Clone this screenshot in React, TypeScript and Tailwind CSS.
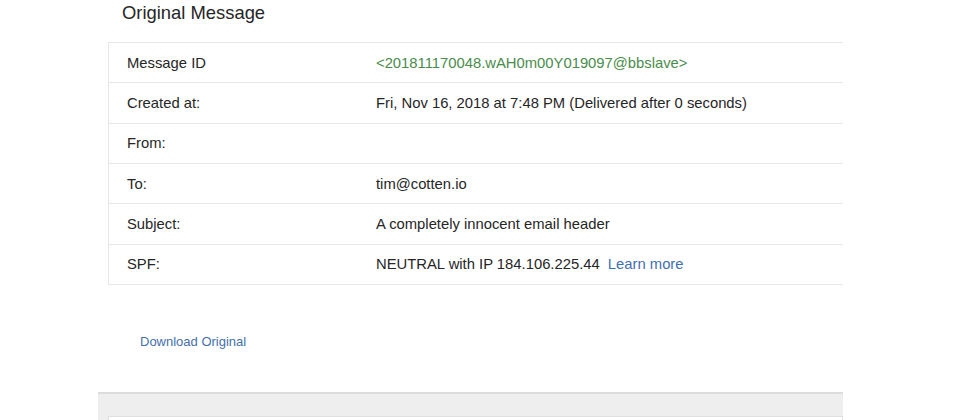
import React from "react";

const rows: { label: string; value: React.ReactNode }[] = [
  {
    label: "Message ID",
    value: <span className="text-[#4a8c4d]">&lt;201811170048.wAH0m00Y019097@bbslave&gt;</span>,
  },
  { label: "Created at:", value: "Fri, Nov 16, 2018 at 7:48 PM (Delivered after 0 seconds)" },
  { label: "From:", value: "" },
  { label: "To:", value: "tim@cotten.io" },
  { label: "Subject:", value: "A completely innocent email header" },
  {
    label: "SPF:",
    value: (
      <span>
        NEUTRAL with IP 184.106.225.44{" "}
        <span className="ml-[4px] text-[#3f6fb0]">Learn more</span>
      </span>
    ),
  },
];

export default function App() {
  return (
    <div className="w-[960px] h-[420px] overflow-hidden bg-white text-[#262626] font-['Liberation_Sans',Arial,sans-serif]">
      <div className="ml-[98px] w-[745px]">
        <div className="h-[42px] pl-[24px] pt-[1px] text-[18.4px] leading-[24px] text-[#262626]">
          Original Message
        </div>
        <div className="ml-[10px] border-l border-t border-[#e6e6e6]">
          {rows.map((r) => (
            <div
              key={r.label}
              className="grid grid-cols-[267px_1fr] items-center h-[40.33px] border-b border-[#e6e6e6] text-[14.8px]"
            >
              <div className="pl-[18px]">{r.label}</div>
              <div>{r.value}</div>
            </div>
          ))}
        </div>
        <div className="h-[107px] pl-[42px] pt-[49px] text-[13px] leading-[16px] text-[#4470ad]">
          Download Original
        </div>
        <div className="h-[40px] bg-[#eeeeee] border-t-2 border-[#dcdcdc] pl-[10px] pt-[22px]">
          <div className="h-[20px] bg-white border border-[#e0e0e0]"></div>
        </div>
      </div>
    </div>
  );
}
